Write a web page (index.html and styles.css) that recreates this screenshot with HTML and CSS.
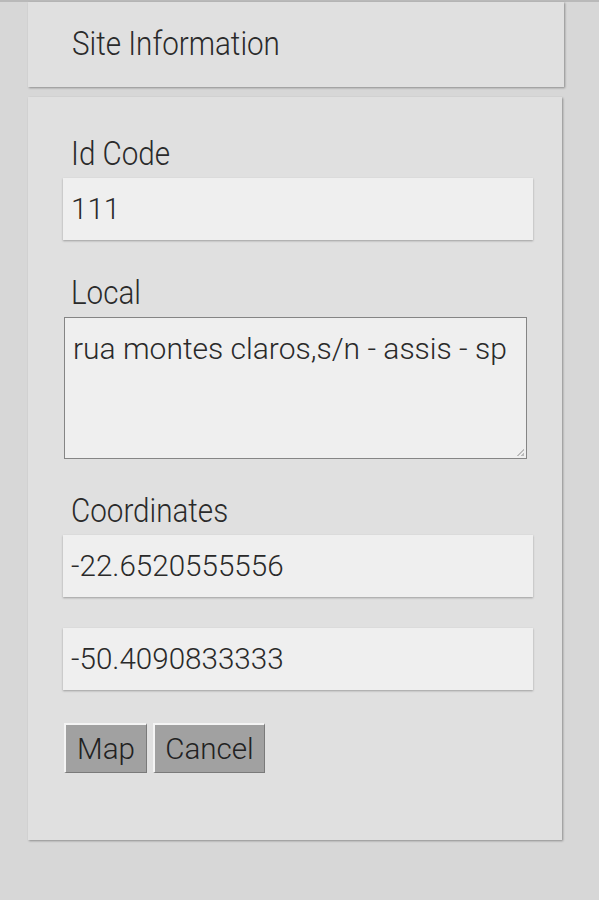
FILE: index.html
```html
<!DOCTYPE html>
<html>
<head>
<meta charset="utf-8">
<link rel="stylesheet" href="styles.css">
</head>
<body>
<div class="page">
  <div class="header-card">
    <span class="title">Site Information</span>
  </div>
  <div class="form-card">
    <div class="field">
      <label class="label">Id Code</label>
      <div class="input">111</div>
    </div>
    <div class="field">
      <label class="label">Local</label>
      <div class="textarea">rua montes claros,s/n - assis - sp<span class="grip"></span></div>
    </div>
    <div class="field">
      <label class="label">Coordinates</label>
      <div class="input">-22.6520555556</div>
      <div class="input second">-50.4090833333</div>
    </div>
    <div class="buttons">
      <button class="btn map">Map</button>
      <button class="btn cancel">Cancel</button>
    </div>
  </div>
</div>
</body>
</html>
```

FILE: styles.css
```css
html, body {
  margin: 0;
  padding: 0;
  background: #d7d7d7;
  font-family: Roboto, "Noto Sans", sans-serif;
  font-weight: 300;
  color: #2a2a2a;
}
.page {
  border-top: 2px solid #b9b9b9;
  height: 898px;
  box-sizing: border-box;
  padding: 0 37px 0 28px;
  display: flex;
  flex-direction: column;
  gap: 10px;
  width: 599px;
}
.header-card {
  background: #e0e0e0;
  height: 85px;
  box-sizing: border-box;
  padding-left: 44px;
  display: flex;
  align-items: center;
  box-shadow: 1px 1px 2px rgba(0,0,0,0.35);
  margin-right: -2px;
}
.title {
  font-size: 29.6px;
  display: inline-block;
  transform: scaleY(1.1);
  margin-top: -2px;
}
.form-card {
  background: #e0e0e0;
  height: 743px;
  box-sizing: border-box;
  box-shadow: 1px 1px 2px rgba(0,0,0,0.35);
  padding: 38px 29px 0 35px;
  display: flex;
  flex-direction: column;
}
.field {
  display: flex;
  flex-direction: column;
}
.label {
  font-size: 29.6px;
  display: block;
  margin-left: 8px;
  height: 43px;
  line-height: 38px;
  transform: scaleY(1.1);
}
.input {
  background: #efefef;
  height: 62px;
  box-sizing: border-box;
  padding-left: 8px;
  font-size: 29.6px;
  line-height: 62px;
  box-shadow: 0 1px 2px rgba(0,0,0,0.3);
  margin-bottom: 34px;
}
.input.second {
  margin-top: -3px;
  margin-bottom: 33px;
}
.textarea {
  position: relative;
  background: #efefef;
  border: 1px solid #858585;
  height: 142px;
  width: 463px;
  box-sizing: border-box;
  padding: 13px 0 0 8px;
  font-size: 30px;
  margin-left: 1px;
  margin-bottom: 33px;
}
.grip {
  position: absolute;
  right: 2px;
  bottom: 2px;
  width: 8px;
  height: 8px;
  background: linear-gradient(135deg, transparent 55%, #bbb 55%, #bbb 65%, transparent 65%, transparent 80%, #bbb 80%);
}
.buttons {
  display: flex;
  gap: 6px;
  margin-left: 1px;
}
.btn {
  font-family: Roboto, "Noto Sans", sans-serif;
  font-weight: 300;
  font-size: 29.6px;
  color: #222;
  background: #a1a1a1;
  height: 50px;
  padding: 0;
  border: 1px solid;
  border-color: #f4f4f4 #7a7a7a #7a7a7a #f4f4f4;
  border-width: 2px 1px 1px 2px;
  box-sizing: border-box;
}
.btn.map { width: 83px; }
.btn.cancel { width: 112px; }
```
